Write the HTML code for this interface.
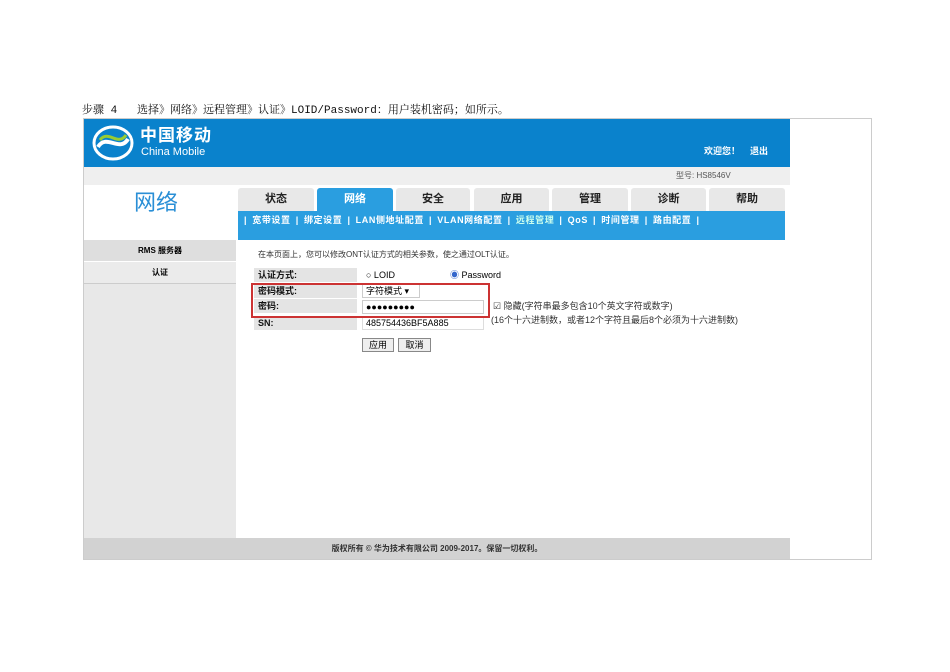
<!DOCTYPE html>
<html><head><meta charset="utf-8"><style>
*{margin:0;padding:0;box-sizing:border-box}
body{width:950px;height:672px;background:#fff;position:relative;font-family:"Liberation Sans","Noto Sans CJK SC",sans-serif;overflow:hidden}
.a{position:absolute;line-height:1.1}
.cap{left:82px;top:105px;font-family:"Liberation Mono","Noto Serif CJK SC",monospace;font-size:11px;color:#111;letter-spacing:0px}
.frame{left:83px;top:118px;width:789px;height:442px;border:1px solid #ccc}
.hdr{left:84px;top:119px;width:706px;height:48px;background:#0a82cc}
.tab{top:188px;height:23px;background:#e8e8e8;font-size:11px;font-weight:bold;text-align:center;line-height:23px;color:#222;border-radius:3px 3px 0 0}
.sub{left:238px;top:211px;width:547px;height:29px;background:#2a9ee0;color:#fff;font-size:9px;font-weight:bold;padding:5px 0 0 6px;letter-spacing:0.6px;word-spacing:2px}
.lbl{left:254px;width:103px;height:14px;background:#e4e4e4;font-size:9px;font-weight:bold;line-height:14px;padding-left:4px;color:#111}
.in{border:1px solid #ccc;background:#fff;font-size:9px;line-height:13px;padding-left:3px}
.btn{top:338px;height:14px;border:1px solid #888;background:#eee;font-size:9px;text-align:center;line-height:12px}
</style></head><body>
<div class="a cap">步骤 4&nbsp;&nbsp; 选择》网络》远程管理》认证》LOID/Password：用户装机密码；如所示。</div>
<div class="a frame"></div>
<div class="a hdr"></div>
<svg class="a" style="left:92px;top:125px" width="42" height="36" viewBox="0 0 42 36"><ellipse cx="21" cy="18" rx="19" ry="16" fill="none" stroke="#fff" stroke-width="3"/><path d="M6 22 C14 8 28 28 36 14" stroke="#fff" stroke-width="4" fill="none"/><path d="M8 15 C16 4 26 22 34 10" stroke="#9c3" stroke-width="3" fill="none"/></svg>
<div class="a" style="left:140px;top:127px;color:#fff;font-size:17px;font-weight:bold;letter-spacing:1px;line-height:18px">中国移动</div>
<div class="a" style="left:141px;top:146px;color:#fff;font-size:11px;line-height:12px">China Mobile</div>
<div class="a" style="left:704px;top:147px;color:#fff;font-size:9px;font-weight:bold">欢迎您！&nbsp;&nbsp;&nbsp;&nbsp;退出</div>
<div class="a" style="left:84px;top:167px;width:706px;height:18px;background:#efefef"></div>
<div class="a" style="left:676px;top:172px;font-size:8px;color:#555">型号: HS8546V</div>
<div class="a" style="left:84px;top:240px;width:152px;height:298px;background:#e8e8e8"></div>
<div class="a" style="left:84px;top:240px;width:152px;height:22px;background:#dedede;border-bottom:1px solid #fff;font-size:8px;font-weight:bold;text-align:center;line-height:22px">RMS 服务器</div>
<div class="a" style="left:84px;top:262px;width:152px;height:22px;background:#ebebeb;border-bottom:1px solid #ccc;font-size:8px;font-weight:bold;text-align:center;line-height:22px">认证</div>
<div class="a" style="left:134px;top:191px;font-size:22px;color:#2a8fd6">网络</div>
<div class="a tab" style="left:238px;width:76px">状态</div>
<div class="a tab" style="left:317px;width:76px;background:#2a9ee0;color:#fff">网络</div>
<div class="a tab" style="left:396px;width:74px">安全</div>
<div class="a tab" style="left:474px;width:75px">应用</div>
<div class="a tab" style="left:552px;width:76px">管理</div>
<div class="a tab" style="left:631px;width:75px">诊断</div>
<div class="a tab" style="left:709px;width:76px">帮助</div>
<div class="a sub">| 宽带设置 | 绑定设置 | LAN侧地址配置 | VLAN网络配置 | <span style="color:#cfe">远程管理</span> | QoS | 时间管理 | 路由配置 |</div>
<div class="a" style="left:258px;top:251px;font-size:8px;color:#333">在本页面上，您可以修改ONT认证方式的相关参数，使之通过OLT认证。</div>
<div class="a lbl" style="top:268px">认证方式:</div>
<div class="a lbl" style="top:284px">密码模式:</div>
<div class="a lbl" style="top:299px">密码:</div>
<div class="a lbl" style="top:316px">SN:</div>
<div class="a" style="left:366px;top:271px;font-size:9px">○ LOID</div>
<div class="a" style="left:450px;top:271px;font-size:9px"><span style="color:#36c">◉</span> Password</div>
<div class="a in" style="left:362px;top:284px;width:58px;height:14px">字符模式 ▾</div>
<div class="a in" style="left:362px;top:300px;width:122px;height:14px;font-weight:bold">●●●●●●●●●</div>
<div class="a in" style="left:362px;top:316px;width:122px;height:14px;border-color:#ddd">485754436BF5A885</div>
<div class="a" style="left:251px;top:283px;width:239px;height:35px;border:2px solid #c33"></div>
<div class="a" style="left:493px;top:302px;font-size:9px;color:#333">☑ 隐藏(字符串最多包含10个英文字符或数字)</div>
<div class="a" style="left:491px;top:315px;font-size:9px;color:#333;width:285px;line-height:10px">(16个十六进制数，或者12个字符且最后8个必须为十六进制数)</div>
<div class="a btn" style="left:362px;width:32px">应用</div>
<div class="a btn" style="left:398px;width:33px">取消</div>
<div class="a" style="left:84px;top:538px;width:706px;height:21px;background:#d2d2d2;text-align:center;font-size:8px;line-height:21px;color:#333;font-weight:bold">版权所有 © 华为技术有限公司 2009-2017。保留一切权利。</div>
</body></html>
